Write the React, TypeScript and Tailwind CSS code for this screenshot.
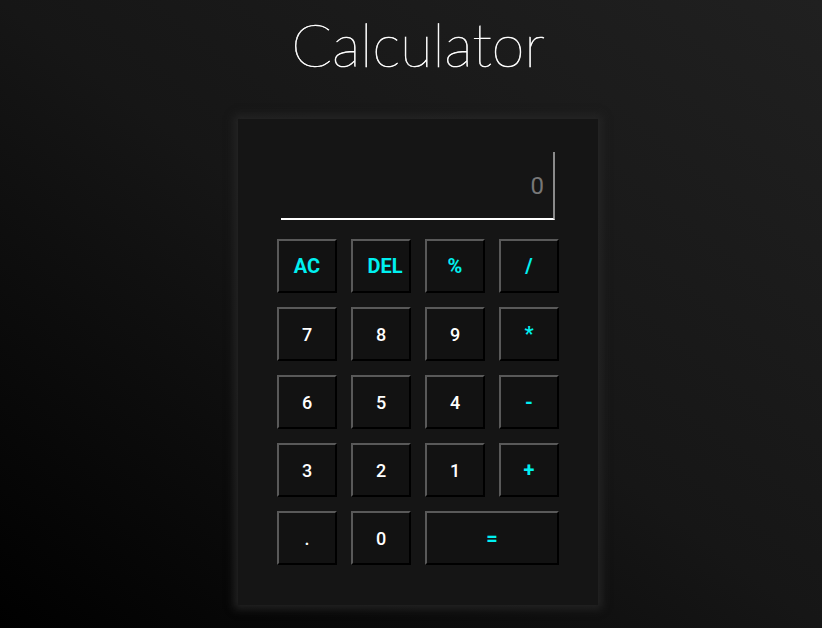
import React from "react";

const btn =
  "h-[54px] flex items-center justify-center bg-[#121212] border-2 border-t-[#595959] border-l-[#595959] border-b-black border-r-black";
const num = btn + " text-white font-medium text-[18px]";
const op = btn + " text-[#00f0f0] font-bold text-[20px]";

export default function App() {
  const rows: [string, boolean][][] = [
    [["AC", true], ["DEL", true], ["%", true], ["/", true]],
    [["7", false], ["8", false], ["9", false], ["*", true]],
    [["6", false], ["5", false], ["4", false], ["-", true]],
    [["3", false], ["2", false], ["1", false], ["+", true]],
  ];
  return (
    <div
      className="min-h-screen w-full bg-[linear-gradient(to_top_right,#000000_0%,#161616_50%,#202020_100%)] flex flex-col items-center pl-[14px]"
      style={{ fontFamily: "Roboto, 'Liberation Sans', sans-serif" }}
    >
      <h1
        className="text-white text-[60px] leading-none mt-[14px] tracking-[-0.3px] [-webkit-text-stroke:0.6px_white]"
        style={{ fontFamily: "Lato, 'Open Sans', sans-serif", fontWeight: 100 }}
      >
        Calculator
      </h1>
      <div className="mt-[45px] w-[360px] h-[486px] bg-[#151515] shadow-[0_0_8px_4px_rgba(38,38,38,0.9)] flex flex-col items-center pt-[33px]">
        <div className="w-[274px] h-[68px] border-b-2 border-b-white border-r-2 border-r-[#8a8a8a] flex items-center justify-end pr-[9px] pt-[2px]">
          <span className="text-[24px] text-[#777777]">0</span>
        </div>
        <div className="mt-[19px] grid grid-cols-[repeat(4,60px)] gap-[14px]">
          {rows.flat().map(([label, isOp], i) => (
            <div key={i} className={isOp ? op : num}>
              {label === "DEL" ? <span className="pl-[8px]">DEL</span> : label}
            </div>
          ))}
          <div className={num}>.</div>
          <div className={num}>0</div>
          <div className={op + " col-span-2"}>=</div>
        </div>
      </div>
    </div>
  );
}
